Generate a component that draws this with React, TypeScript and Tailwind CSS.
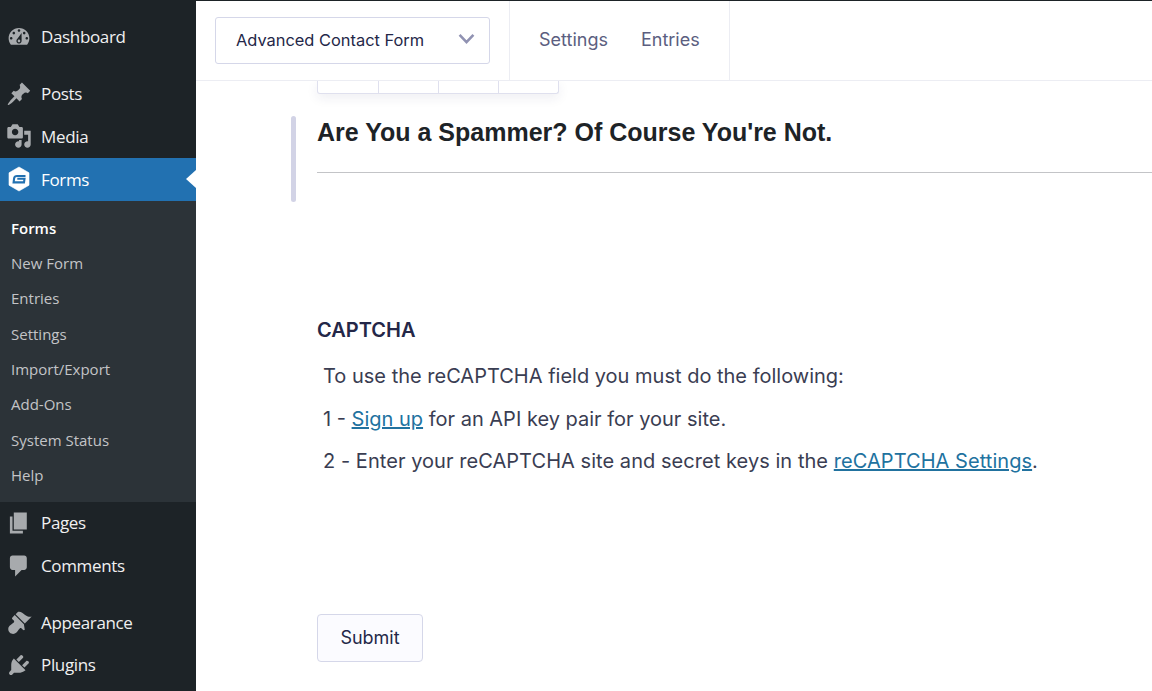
import React from "react";

const paths = {
  dashboard: "M3.76 16h12.48c1.1-1.37 1.76-3.11 1.76-5 0-4.42-3.58-8-8-8s-8 3.58-8 8c0 1.89.66 3.63 1.76 5zM10 4c.55 0 1 .45 1 1s-.45 1-1 1-1-.45-1-1 .45-1 1-1zM6 6c.55 0 1 .45 1 1s-.45 1-1 1-1-.45-1-1 .45-1 1-1zm8 0c.55 0 1 .45 1 1s-.45 1-1 1-1-.45-1-1 .45-1 1-1zm-5.37 5.55L12 7v6c0 1.1-.9 2-2 2s-2-.9-2-2c0-.57.24-1.08.63-1.45zM4 10c.55 0 1 .45 1 1s-.45 1-1 1-1-.45-1-1 .45-1 1-1zm12 0c.55 0 1 .45 1 1s-.45 1-1 1-1-.45-1-1 .45-1 1-1zm-5 3c0-.55-.45-1-1-1s-1 .45-1 1 .45 1 1 1 1-.45 1-1z",
  posts: "M10.44 3.02l1.82-1.82 6.36 6.35-1.83 1.82c-1.05-.68-2.48-.57-3.41.36l-.75.75c-.92.93-1.04 2.35-.35 3.41l-1.83 1.82-2.41-2.41-2.8 2.79c-.42.42-3.38 2.71-3.8 2.29s1.86-3.39 2.28-3.81l2.79-2.79L4.1 9.36l1.83-1.82c1.05.69 2.48.57 3.4-.36l.75-.75c.93-.92 1.05-2.35.36-3.41z",
  media: "M13 11V4c0-.55-.45-1-1-1h-1.67L9 1H5L3.67 3H2c-.55 0-1 .45-1 1v7c0 .55.45 1 1 1h10c.55 0 1-.45 1-1zM7 4.5c1.38 0 2.5 1.12 2.5 2.5S8.38 9.5 7 9.5 4.5 8.38 4.5 7 5.62 4.5 7 4.5zM14 6h5v10.5c0 1.38-1.12 2.5-2.5 2.5S14 17.88 14 16.5s1.12-2.5 2.5-2.5c.17 0 .34.02.5.05V9h-3V6zm-4 8.05V13h2v3.5c0 1.38-1.12 2.5-2.5 2.5S7 17.88 7 16.5 8.12 14 9.5 14c.17 0 .34.02.5.05z",
  pages: "M6 15V2h10v13H6zm-1 1h8v2H3V5h2v11z",
  comments: "M5 2h9c1.1 0 2 .9 2 2v7c0 1.1-.9 2-2 2h-2l-5 5v-5H5c-1.1 0-2-.9-2-2V4c0-1.1.9-2 2-2z",
  appearance: "M14.48 11.06L7.41 3.99l1.5-1.5c.5-.56 2.3-.47 3.51.32 1.21.8 1.43 1.28 2.91 2.1 1.18.64 2.45 1.26 4.45.85zm-.71.71L6.7 4.7 4.93 6.47c-.39.39-.39 1.02 0 1.41l1.06 1.06c.39.39.39 1.03 0 1.42-.6.6-1.43 1.11-2.21 1.69-.35.26-.7.53-1.01.84-1.43 1.43-1.4 3.75.05 5.2 1.45 1.45 3.77 1.48 5.2.05.31-.31.58-.66.84-1.01.58-.78 1.09-1.61 1.69-2.21.39-.39 1.03-.39 1.42 0l1.06 1.06c.39.39 1.02.39 1.41 0z",
  plugins: "M13.11 4.36L9.87 7.6 8 5.73l3.24-3.24c.35-.34 1.05-.2 1.56.32.52.51.66 1.21.31 1.55zm-8 1.77l.91-1.12 9.01 9.01-1.19.84c-.71.71-2.63 1.16-3.82 1.16H6.14L4.9 17.26c-.59.59-1.54.59-2.12 0-.59-.58-.59-1.53 0-2.12l1.24-1.24v-3.88c0-1.13.4-3.19 1.09-3.89zm7.26 3.97l3.24-3.24c.34-.35 1.04-.21 1.55.31.52.51.66 1.21.31 1.55l-3.24 3.25z",
};

function Dash({ d }: { d: string }) {
  return (
    <svg viewBox="0 0 20 20" className="w-[26px] h-[26px] shrink-0 text-[#a7aaad]" fill="currentColor">
      <path fillRule="evenodd" d={d} />
    </svg>
  );
}

function GravityIcon() {
  return (
    <svg viewBox="0 0 26 26" className="w-[26px] h-[26px] shrink-0">
      <path d="M13 1l10 5.8v12.4L13 25 3 19.2V6.8z" fill="#fff" strokeLinejoin="round" stroke="#fff" strokeWidth="0.6" />
      <path d="M19.5 10H11c-1.6 0-2.6.8-2.9 2.3L7.6 16.4H18l.5-3.6h-7.2" fill="none" stroke="#2271b1" strokeWidth="2.1" />
    </svg>
  );
}

function Item({ d, label }: { d: string; label: string }) {
  return (
    <div className="flex items-center gap-[9.5px] pl-[5.5px] h-[42.4px] text-[17px] tracking-[-0.35px] text-[#f0f0f1]">
      <Dash d={d} />
      <span>{label}</span>
    </div>
  );
}

const subs = ["New Form", "Entries", "Settings", "Import/Export", "Add-Ons", "System Status", "Help"];

function Sidebar() {
  return (
    <aside className="w-[196px] h-full shrink-0 bg-[#1d2327] overflow-hidden font-['Open_Sans','Noto_Sans',sans-serif]">
      <div className="pt-4">
        <Item d={paths.dashboard} label="Dashboard" />
      </div>
      <div className="pt-[14.3px] pb-[0.5px]">
        <Item d={paths.posts} label="Posts" />
        <Item d={paths.media} label="Media" />
      </div>
      <div className="relative flex items-center gap-[9.5px] pl-[5.5px] h-[43px] bg-[#2271b1] text-[17px] tracking-[-0.35px] text-white">
        <GravityIcon />
        <span>Forms</span>
        <div className="absolute right-0 top-[12px] border-y-[9px] border-r-[10px] border-y-transparent border-r-white" />
      </div>
      <div className="bg-[#2c3338] h-[301px] pt-[9.5px] pl-[11px] text-[15px] text-[#c3c4c7]">
        <div className="h-[35.3px] flex items-center font-semibold text-white">Forms</div>
        {subs.map((s) => (
          <div key={s} className="h-[35.3px] flex items-center">{s}</div>
        ))}
      </div>
      <Item d={paths.pages} label="Pages" />
      <Item d={paths.comments} label="Comments" />
      <div className="pt-[14.5px]">
        <Item d={paths.appearance} label="Appearance" />
        <Item d={paths.plugins} label="Plugins" />
      </div>
    </aside>
  );
}

function TopBar() {
  return (
    <header className="relative z-10 h-[81px] shrink-0 flex bg-white border-t border-b border-t-[#1d2327] border-b-[#ecedf3] pl-[19px]">
      <div className="w-[275px] h-[47px] mt-4 flex items-center justify-between pl-[20px] pr-[14px] pb-[1px] bg-white border border-[#d5d7e9] rounded-[3px] text-[16.4px] text-[#242748]">
        <span>Advanced Contact Form</span>
        <svg viewBox="0 0 16 16" className="w-[17px] h-[17px] mb-[3px] text-[#9092b2]" fill="none" stroke="currentColor" strokeWidth="2.4">
          <path d="M1.5 4.5l6.5 7 6.5-7" />
        </svg>
      </div>
      <nav className="ml-[19px] w-[221px] flex items-center gap-[33px] pl-[29px] border-x border-[#ecedf3] text-[18px] text-[#5b5e80] pb-[2px]">
        <span>Settings</span>
        <span>Entries</span>
      </nav>
    </header>
  );
}

function Editor() {
  return (
    <main className="flex-1 min-h-0 overflow-hidden pl-[121px] text-[#242748]">
      <div className="flex w-[242px] h-[13px] bg-white border border-t-0 border-[#dfe0ee] rounded-b-[3px] shadow-[0_4px_12px_rgba(40,40,90,0.08)]">
        <div className="w-[61px] border-r border-[#dfe0ee]" />
        <div className="w-[60px] border-r border-[#dfe0ee]" />
        <div className="w-[60px] border-r border-[#dfe0ee]" />
      </div>
      <div className="relative mt-[22px] h-[86px]">
        <div className="absolute left-[-26px] top-0 w-[5px] h-[86px] rounded-sm bg-[#d2d3e6]" />
        <h2 className="pt-[1px] font-['Liberation_Sans',sans-serif] font-bold text-[25px] leading-[30px] text-[#1d2327]">
          Are You a Spammer? Of Course You're Not.
        </h2>
        <div className="mt-[25px] h-px bg-[#c3c4c7]" />
      </div>
      <h3 className="mt-[116px] text-[20px] leading-6 font-semibold">CAPTCHA</h3>
      <div className="mt-[22px] pl-[6px] text-[20px] leading-6 text-[#3a3d52]">
        <p>To use the reCAPTCHA field you must do the following:</p>
        <p className="mt-[19px]">1 - <a className="text-[#21729f] underline">Sign up</a> for an API key pair for your site.</p>
        <p className="mt-[18px] tracking-[0.05px]">2 - Enter your reCAPTCHA site and secret keys in the <a className="text-[#21729f] underline">reCAPTCHA Settings</a>.</p>
      </div>
      <button className="mt-[141px] w-[106px] h-[48px] pb-[2px] bg-[#fbfbff] border border-[#d5d7e9] rounded-[4px] text-[18px] text-[#242748]">
        Submit
      </button>
    </main>
  );
}

export default function App() {
  return (
    <div className="flex w-[1152px] h-[691px] overflow-hidden bg-white font-['Inter',sans-serif]">
      <Sidebar />
      <div className="flex-1 min-w-0 flex flex-col">
        <TopBar />
        <Editor />
      </div>
    </div>
  );
}
